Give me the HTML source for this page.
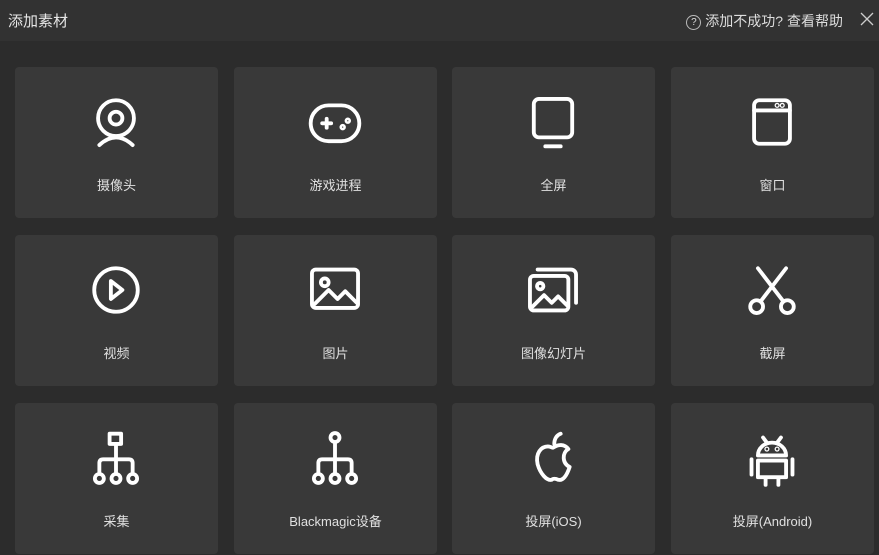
<!DOCTYPE html>
<html><head><meta charset="utf-8"><style>
*{margin:0;padding:0;box-sizing:border-box}
body{width:879px;height:555px;background:#2c2c2c;font-family:"Liberation Sans","Noto Sans CJK SC",sans-serif;color:#ddd;overflow:hidden;position:relative}
.hd{position:absolute;left:0;top:0;width:879px;height:41px;background:#323232}
.t{position:absolute;left:8px;top:10px;font-size:15px;color:#e6e6e6}
.h{position:absolute;right:36px;top:11px;font-size:14px;color:#ddd}
.x{position:absolute;right:5px;top:12px;width:14px;height:14px}
.tile{position:absolute;width:203px;height:151px;background:#393939;border-radius:4px}
.tile svg{position:absolute;left:69px;top:23px;width:64px;height:64px;fill:none;stroke:#fff;stroke-width:3;stroke-linecap:round;stroke-linejoin:round}
.tile span{position:absolute;left:0;right:0;top:108px;text-align:center;font-size:13px;color:#e0e0e0}
</style></head><body>
<div class="hd"><div class="t">添加素材</div><div class="h"><span style="display:inline-block;width:15px;height:15px;border:1px solid #bbb;border-radius:50%;font-size:10px;text-align:center;line-height:13px;vertical-align:1px">?</span> 添加不成功? 查看帮助</div><svg class="x" viewBox="0 0 14 14"><path d="M1 1l12 12M13 1L1 13" stroke="#ccc" stroke-width="1.3"/></svg></div>

<div class="tile" style="left:15px;top:67px"><svg viewBox="0 0 50 50"><circle cx="25" cy="22" r="14"/><circle cx="25" cy="22" r="5"/><path d="M12 43q13-12 26 0"/></svg><span>摄像头</span></div>
<div class="tile" style="left:234px;top:67px"><svg viewBox="0 0 50 50"><rect x="6" y="12" width="38" height="28" rx="14"/><path d="M15 26h7M18.5 22.5v7"/><circle cx="31" cy="29" r="1"/><circle cx="35" cy="24" r="1"/></svg><span>游戏进程</span></div>
<div class="tile" style="left:452px;top:67px"><svg viewBox="0 0 50 50"><rect x="10" y="7" width="30" height="30" rx="4"/><path d="M19 44h12"/></svg><span>全屏</span></div>
<div class="tile" style="left:671px;top:67px"><svg viewBox="0 0 50 50"><rect x="11" y="8" width="28" height="34" rx="4"/><path d="M11 16h28"/><circle cx="29" cy="12" r=".5"/><circle cx="33" cy="12" r=".5"/></svg><span>窗口</span></div>

<div class="tile" style="left:15px;top:235px"><svg viewBox="0 0 50 50"><circle cx="25" cy="25" r="17"/><path d="M21 18l9 7-9 7z"/></svg><span>视频</span></div>
<div class="tile" style="left:234px;top:235px"><svg viewBox="0 0 50 50"><rect x="7" y="9" width="36" height="30" rx="3"/><circle cx="17" cy="19" r="3"/><path d="M9 36l11-11 7 7 6-6 9 9"/></svg><span>图片</span></div>
<div class="tile" style="left:452px;top:235px"><svg viewBox="0 0 50 50"><rect x="7" y="14" width="30" height="27" rx="3"/><path d="M13 9h26a4 4 0 0 1 4 4v22"/><circle cx="15" cy="22" r="2.5"/><path d="M9 38l9-9 6 6 5-5 7 7"/></svg><span>图像幻灯片</span></div>
<div class="tile" style="left:671px;top:235px"><svg viewBox="0 0 50 50"><path d="M14 8l20 26M36 8L16 34"/><circle cx="13" cy="38" r="5"/><circle cx="37" cy="38" r="5"/></svg><span>截屏</span></div>

<div class="tile" style="left:15px;top:403px"><svg viewBox="0 0 50 50"><rect x="20" y="6" width="9" height="8"/><path d="M25 14v12M12 37v-8q0-3 3-3h20q3 0 3 3v8M25 26v11"/><circle cx="12" cy="41" r="3.5"/><circle cx="25" cy="41" r="3.5"/><circle cx="38" cy="41" r="3.5"/></svg><span>采集</span></div>
<div class="tile" style="left:234px;top:403px"><svg viewBox="0 0 50 50"><circle cx="25" cy="9" r="3.5"/><path d="M25 13v13M12 37v-8q0-3 3-3h20q3 0 3 3v8M25 26v11"/><circle cx="12" cy="41" r="3.5"/><circle cx="25" cy="41" r="3.5"/><circle cx="38" cy="41" r="3.5"/></svg><span>Blackmagic设备</span></div>
<div class="tile" style="left:452px;top:403px"><svg viewBox="0 0 50 50"><path d="M25 17c4-3 9-3 12 1-5 3-5 11 1 14-2 6-5 11-9 10-2-1-4-1-5 0-4 1-9-5-11-12-2-9 3-14 8-14 2 0 3 1 4 1z"/><path d="M26 14c0-4 2-7 5-8"/></svg><span>投屏(iOS)</span></div>
<div class="tile" style="left:671px;top:403px"><svg viewBox="0 0 50 50"><path d="M14 23a11 10 0 0 1 22 0zM18 9l3 4M32 9l-3 4M14 27h22v13H14zM9 26v12M41 26v12M20 40v6M30 40v6"/><circle cx="21" cy="18" r=".5"/><circle cx="29" cy="18" r=".5"/></svg><span>投屏(Android)</span></div>
</body></html>
